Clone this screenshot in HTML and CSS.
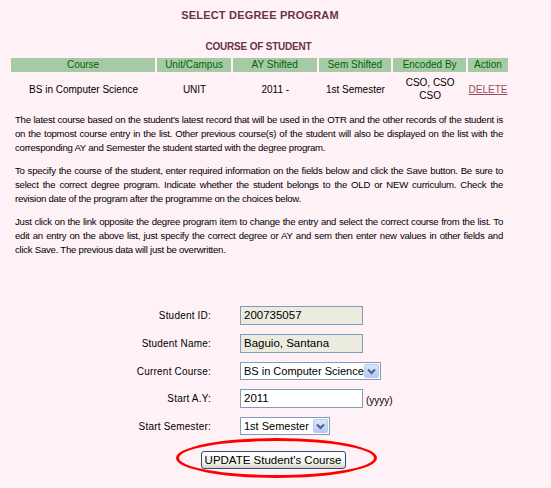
FILE: index.html
```html
<!DOCTYPE html>
<html>
<head>
<meta charset="utf-8">
<link rel="stylesheet" href="styles.css">
</head>
<body>
<div class="page">
  <h1 class="title">SELECT DEGREE PROGRAM</h1>
  <h2 class="subtitle">COURSE OF STUDENT</h2>
  <table class="courses">
    <thead>
      <tr>
        <th class="c1">Course</th>
        <th class="c2">Unit/Campus</th>
        <th class="c3">AY Shifted</th>
        <th class="c4">Sem Shifted</th>
        <th class="c5">Encoded By</th>
        <th class="c6">Action</th>
      </tr>
    </thead>
    <tbody>
      <tr>
        <td>BS in Computer Science</td>
        <td>UNIT</td>
        <td>2011 -</td>
        <td>1st Semester</td>
        <td>CSO, CSO<br>CSO</td>
        <td><a class="del" href="#">DELETE</a></td>
      </tr>
    </tbody>
  </table>

  <div class="notes">
    <p>The latest course based on the student's latest record that will be used in the OTR and the other records of the student is on the topmost course entry in the list. Other previous course(s) of the student will also be displayed on the list with the corresponding AY and Semester the student started with the degree program.</p>
    <p>To specify the course of the student, enter required information on the fields below and click the Save button. Be sure to select the correct degree program. Indicate whether the student belongs to the OLD or NEW curriculum. Check the revision date of the program after the programme on the choices below.</p>
    <p>Just click on the link opposite the degree program item to change the entry and select the correct course from the list. To edit an entry on the above list, just specify the correct degree or AY and sem then enter new values in other fields and click Save. The previous data will just be overwritten.</p>
  </div>

  <form class="form">
    <label class="lbl">Student ID:</label>
    <div class="field"><span class="input ro">200735057</span></div>

    <label class="lbl">Student Name:</label>
    <div class="field"><span class="input ro">Baguio, Santana</span></div>

    <label class="lbl">Current Course:</label>
    <div class="field">
      <span class="select wide"><span class="sel-text">BS in Computer Science</span><span class="arrow"><svg width="9" height="7" viewBox="0 0 9 7"><path d="M1 1.5 L4.5 5 L8 1.5" fill="none" stroke="#4d6185" stroke-width="2"/></svg></span></span>
    </div>

    <label class="lbl">Start A.Y:</label>
    <div class="field"><span class="input">2011</span><span class="hint">(yyyy)</span></div>

    <label class="lbl">Start Semester:</label>
    <div class="field">
      <span class="select narrow"><span class="sel-text">1st Semester</span><span class="arrow"><svg width="9" height="7" viewBox="0 0 9 7"><path d="M1 1.5 L4.5 5 L8 1.5" fill="none" stroke="#4d6185" stroke-width="2"/></svg></span></span>
    </div>
  </form>

  <div class="actions">
    <span class="btn-wrap"><button class="btn" type="button">UPDATE Student's Course</button></span>
  </div>
</div>
</body>
</html>
```

FILE: styles.css
```css
html, body {
  margin: 0;
  padding: 0;
  background: #fff2f7;
}
body {
  font-family: "Liberation Sans", Arial, sans-serif;
  color: #000;
}
.page {
  width: 551px;
  height: 488px;
  overflow: hidden;
  padding-top: 8px;
  box-sizing: border-box;
}
.title {
  margin: 0;
  text-align: center;
  font-size: 11px;
  line-height: 14px;
  font-weight: bold;
  letter-spacing: 0.2px;
  color: #6b3348;
  padding-right: 31px;
}
.subtitle {
  margin: 19px 0 0 0;
  text-align: center;
  font-size: 10px;
  line-height: 12px;
  font-weight: bold;
  color: #6b3348;
  letter-spacing: -0.2px;
  padding-right: 34px;
}
.courses {
  margin: 5px 0 0 10px;
  border-collapse: separate;
  border-spacing: 1px 0;
  width: 499px;
  font-size: 10px;
}
.courses th {
  background: #a6caa6;
  color: #006400;
  font-weight: normal;
  height: 14px;
  padding: 0;
  line-height: 14px;
  text-align: center;
  border-right: 1px solid #fff2f7;
}
.courses .c1 { width: 145px; }
.courses .c2 { width: 74px; }
.courses .c3 { width: 84px; }
.courses .c4 { width: 73px; }
.courses .c5 { width: 73px; }
.courses .c6 { width: 40px; border-right: 0; }
.courses td {
  text-align: center;
  padding: 4px 0 0 0;
  line-height: 13px;
  height: 26px;
  vertical-align: middle;
}
.del {
  color: #9b4a5a;
  text-decoration: underline;
}
.notes {
  padding: 11px 48px 0 15px;
  font-size: 9.6px;
  letter-spacing: -0.25px;
  line-height: 14px;
  text-align: justify;
}
.notes p {
  margin: 0 0 9px 0;
}
.form {
  display: grid;
  grid-template-columns: 211px auto;
  column-gap: 29px;
  row-gap: 9px;
  margin-top: 49px;
  align-items: center;
}
.lbl {
  justify-self: end;
  font-size: 10px;
  letter-spacing: 0.2px;
}
.field {
  display: flex;
  align-items: center;
}
.input {
  display: inline-block;
  box-sizing: border-box;
  width: 123px;
  height: 19px;
  border: 1px solid #7f9db9;
  background: #fff;
  font-size: 11.5px;
  line-height: 17px;
  padding-left: 3px;
}
.input.ro {
  background: #ecebdf;
}
.hint {
  font-size: 10px;
  margin-left: 3px;
  margin-top: 3px;
}
.select {
  display: inline-flex;
  align-items: center;
  box-sizing: border-box;
  height: 18px;
  border: 1px solid #7f9db9;
  background: #fff;
  font-size: 11px;
  padding-left: 3px;
  justify-content: space-between;
  white-space: nowrap;
  overflow: hidden;
}
.select.wide { width: 141px; }
.select.narrow { width: 90px; }
.arrow {
  flex: none;
  display: inline-flex;
  align-items: center;
  justify-content: center;
  width: 15px;
  height: 14px;
  margin-right: 1px;
  border-radius: 2px;
  background: linear-gradient(#dbe6fd, #b7c9f4);
  border: 1px solid #b8c9ef;
  box-sizing: border-box;
}
.actions {
  display: flex;
  justify-content: center;
  margin-top: 16px;
  padding-right: 5px;
}
.btn-wrap {
  position: relative;
  display: inline-block;
}
.btn-wrap::before {
  content: "";
  position: absolute;
  left: -25px;
  top: -13px;
  width: 201px;
  height: 40px;
  box-sizing: border-box;
  border: 3px solid #ff0000;
  border-radius: 50%;
  pointer-events: none;
}
.btn {
  display: block;
  width: 145px;
  height: 18px;
  padding: 0;
  border: 1px solid #2d4f7c;
  border-radius: 3px;
  background: linear-gradient(#ffffff, #f0f0ea 70%, #d6d0c4);
  font-family: "Liberation Sans", Arial, sans-serif;
  font-size: 11.5px;
  line-height: 16px;
  color: #000;
}
```
